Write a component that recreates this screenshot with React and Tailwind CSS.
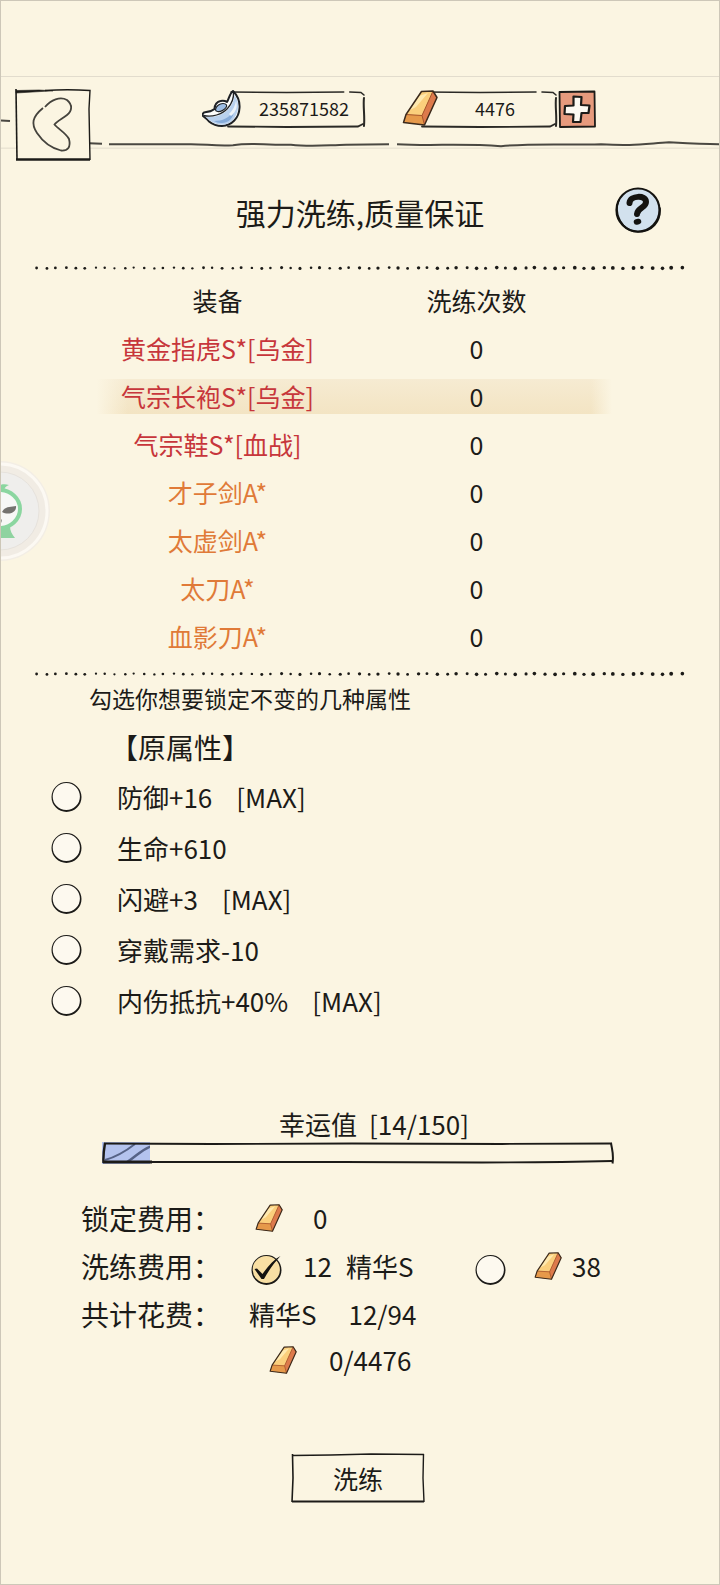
import React, { useState } from "react";

const equipments = [
  { id: 1, name: "黄金指虎S*[乌金]", grade: "S", count: 0 },
  { id: 2, name: "气宗长袍S*[乌金]", grade: "S", count: 0 },
  { id: 3, name: "气宗鞋S*[血战]", grade: "S", count: 0 },
  { id: 4, name: "才子剑A*", grade: "A", count: 0 },
  { id: 5, name: "太虚剑A*", grade: "A", count: 0 },
  { id: 6, name: "太刀A*", grade: "A", count: 0 },
  { id: 7, name: "血影刀A*", grade: "A", count: 0 },
];

const attributes = [
  { id: "def", label: "防御+16", max: true },
  { id: "hp", label: "生命+610", max: false },
  { id: "dodge", label: "闪避+3", max: true },
  { id: "need", label: "穿戴需求-10", max: false },
  { id: "resist", label: "内伤抵抗+40%", max: true },
];

const gradeColors = {
  S: "text-[#c7363b]",
  A: "text-[#e07a38]",
};

const luck = { current: 14, total: 150 };

// Gold bar
const GoldBar = ({ className }) => (
  <svg viewBox="0 0 36 36" className={className} fill="none" aria-hidden="true">
    <path d="M19.5 1.5 L31 1 L35 7.5 L22.5 35 L1.5 32.5 L4 24.5 Z" fill="#e98d4f" />
    <path d="M19.5 1.5 L31 1 L20 25.5 L4 24.5 Z" fill="#fbcf7c" />
    <path d="M17 6 L26 3 L14 17 L8 20 Z" fill="#ffe9ae" />
    <path d="M4 24.5 L20 25.5 L22.5 35 L1.5 32.5 Z" fill="#e6994a" />
    <path d="M31 1 L35 7.5 L22.5 35 L20 25.5 Z" fill="#dd7a4c" />
    <path d="M4 24.5 L20 25.5 L31 1 M20 25.5 L22.5 35" stroke="#a5552a" strokeWidth="1" />
    <path
      d="M19.5 1.5 L31 1 L35 7.5 L22.5 35 L1.5 32.5 L4 24.5 Z"
      stroke="#3b2a1c"
      strokeWidth="1.5"
      strokeLinejoin="round"
    />
  </svg>
);

// Silver ingot
const Ingot = ({ className }) => (
  <svg viewBox="0 0 40 38" className={className} fill="none" stroke="#1f2226" strokeLinejoin="round" aria-hidden="true">
    <path
      d="M31 1 C35 5 38 11 37.500 18 C37 28 30 35.500 20 36 C15 36 10 34 7 31.500 C5 29 3 27.500 1 26 C0 24.500 1 22.500 3 22.300 C7 22 10 21 12.500 19 C12.500 15 15 11.500 18.500 11 C21 10.500 23.500 11 25 12 C27 9 27.500 3.500 31 1 Z"
      fill="#fdfdfb"
      strokeWidth="2"
    />
    <path
      d="M32.500 5 C36 10 37 16 35.500 21 C33 30 27 34.500 20 34.800 C15 34.500 11 33 8 30.500 C6.500 29 5 27.800 4 27 C13 27.500 21 25 26 19.500 C30 15 32 11 32.500 5 Z"
      fill="#b9d1ee"
      stroke="none"
    />
    <path d="M12 31 C20 31 28 28 32 20 C32 28 26 33.500 19 33 C16 33 14 32 12 31 Z" fill="#86abd9" stroke="none" />
    <path d="M27 24 C31 20 33 16 34 11 C36 16 34 22 29 26 Z" fill="#eef4fa" stroke="none" />
    <path d="M1.500 25.500 C10 27.500 20 24.500 25.500 18.500 C30 13.500 32 9 31.500 2" strokeWidth="1.300" />
    <path
      d="M13.500 19.500 C14 16 17.500 13.500 21 13.500 C24.500 13.500 25.500 15.500 24 17.500 C22.500 20 18.500 22 15.500 21.500 C14 21.300 13.500 20.500 13.500 19.500 Z"
      fill="#9dbde4"
      strokeWidth="1.200"
    />
  </svg>
);

// Rough pen frame around the currency amounts
const AmountFrame = () => (
  <svg
    viewBox="0 0 138 38"
    preserveAspectRatio="none"
    className="absolute inset-0 h-full w-full"
    fill="none"
    stroke="#2b2a26"
    strokeLinecap="round"
    aria-hidden="true"
  >
    <path d="M5 2 L60 2.500 L116 2" strokeWidth="1.600" />
    <path d="M122 2 L133 2.500 L136 5" strokeWidth="1.600" />
    <path d="M136 8 C135 16 137 26 136 36" strokeWidth="2" />
    <path d="M2 36.500 L60 37 L130 36.500 L135 34" strokeWidth="1.800" />
  </svg>
);

// Row of ink dots, heavier towards the right end
const DottedLine = () => (
  <svg className="block h-2 w-full" aria-hidden="true">
    {Array.from({ length: 67 }, (_, i) => (
      <circle
        key={i}
        cx={`${0.7 + i * 1.49 + Math.sin(i * 2.3) * 0.12}%`}
        cy={4 + Math.sin(i * 1.7) * 0.4}
        r={i < 6 ? 1.4 : 1.1 + (i / 68) * 0.8 + Math.sin(i * 3.1) * 0.15}
        fill="#1c1b18"
      />
    ))}
  </svg>
);

// Checkbox / radio drawn as an ink circle
const InkCheck = ({ id, type = "checkbox", name, checked, onChange, className = "" }) => (
  <span className={`relative block size-8 shrink-0 ${className}`}>
    <input
      id={id}
      type={type}
      name={name}
      checked={checked}
      onChange={onChange}
      className="block size-8 cursor-pointer appearance-none rounded-full"
    />
    <svg viewBox="0 0 32 32" className="pointer-events-none absolute inset-0 size-8" fill="none" aria-hidden="true">
      <circle cx="16.500" cy="16" r="14.500" fill={checked ? "#f8dfa3" : "#fdf9ef"} />
      <path
        d="M16.500 1 A15 15 0 1 1 16.500 31 A15 15 0 1 1 16.500 1 Z M16.300 1.900 A13.600 13.600 0 1 0 16.300 29.100 A13.600 13.600 0 1 0 16.300 1.900 Z"
        fill="#1c1b18"
        fillRule="evenodd"
      />
      {checked && (
        <path d="M4.500 15 L7 14.500 L12.500 20 C18 12 24 5.500 30.500 2 C25 8 18.500 16.500 14 25 L11.500 25 Z" fill="#141310" />
      )}
    </svg>
  </span>
);

const App = () => {
  const [selected, setSelected] = useState(2);
  const [locked, setLocked] = useState([]);
  const [payment, setPayment] = useState("essence");

  const toggleLock = (id) => {
    setLocked((prev) => (prev.includes(id) ? prev.filter((el) => el !== id) : [...prev, id]));
  };

  return (
    <div className="relative min-h-screen overflow-hidden border border-[#cdc7b8] bg-[#fbf5e2] font-['Noto_Sans_CJK_SC',sans-serif] text-[#1c1b18]">
      {/* Status bar gap */}
      <div className="h-[76px] border-b border-[#e2dccd]" />

      {/* Top bar */}
      <header className="relative flex h-[83px] items-start pl-[14px]">
        <svg
          viewBox="0 0 718 84"
          preserveAspectRatio="none"
          className="absolute inset-0 h-full w-full"
          fill="none"
          stroke="#4a4842"
          aria-hidden="true"
        >
          <path d="M0 72 H718" stroke="#e2dccd" />
          <path d="M0 44 L9 44.500" strokeWidth="2" />
          <path d="M88 67 L101 67.500" strokeWidth="2" />
          <path
            d="M108 68 L190 68 C205 68 215 70 232 69 C250 66 262 69 290 68.500 C310 71 325 69 345 68.500 L388 68"
            strokeWidth="2"
          />
          <path
            d="M396 68 C430 70 460 67 500 70 C530 67 560 69 600 68 C630 70 640 68 668 66 C685 67 700 68 718 68"
            strokeWidth="2"
          />
        </svg>
        <button type="button" aria-label="返回" className="relative mt-3 h-[72px] w-[76px] cursor-pointer">
          <svg viewBox="0 0 76 72" className="h-full w-full" fill="none" stroke="#1c1b18">
            <path d="M1.500 1.500 L74 1 L74 70 L1.500 70 Z" fill="#fbf5e2" stroke="none" />
            <path d="M1 0 L2 71" strokeWidth="1.600" />
            <path d="M1 1.500 L24 1 L38 1.800 L1 4 Z" fill="#1c1b18" strokeWidth=".6" />
            <path d="M30 1.500 C45 .5 60 .5 75 1.500 L74 20 L75 71" strokeWidth="1.400" />
            <path d="M1 70.500 H75" strokeWidth="2.600" />
            <path
              d="M30 18 C36 11 45 7 52 11 C58 16 57 22 52 26 C47 30 42 32 39.500 35.500 C43 40 51 44 54 50 C56 58 53 62 46 61.500 C36 59 28 53 22 44 C16 35 17 28 28 19"
              stroke="#45433d"
              strokeWidth="1.800"
            />
          </svg>
        </button>

        {/* Silver */}
        <div className="relative ml-[135px] mt-[13px] h-[38px] w-[140px]">
          <AmountFrame />
          <Ingot className="absolute -left-6 top-0 h-[38px] w-10" />
          <p className="relative pl-4 text-center text-lg leading-[36px]">235871582</p>
        </div>

        {/* Gold */}
        <div className="relative ml-[54px] mt-[13px] h-[38px] w-[138px]">
          <AmountFrame />
          <GoldBar className="absolute -left-[18px] top-0 size-9" />
          <p className="relative pl-3 text-center text-lg leading-[36px]">4476</p>
        </div>
        <button type="button" aria-label="增加" className="relative mt-[13px] size-[38px] cursor-pointer">
          <svg viewBox="0 0 38 38" className="size-full" fill="none" stroke="#1c1b18" strokeLinejoin="round">
            <path d="M1.500 2 L36.500 1.500 L37 36.500 L2 37 Z" fill="#e69a7d" strokeWidth="1.800" />
            <path
              d="M15.500 6.500 L23.500 7 L23 15 L31.500 15.500 L30.500 23 L23.500 23 L22.500 32 L15 32 L15.500 24.500 L6.500 24 L7 16 L15.500 15.500 Z"
              fill="#fdfaf2"
              strokeWidth="2.200"
            />
          </svg>
        </button>
      </header>

      {/* Title */}
      <div className="grid grid-cols-[1fr_auto_1fr] items-start pt-[26px]">
        <h1 className="col-start-2 mt-1 text-3xl leading-[44px]">强力洗练,质量保证</h1>
        <button type="button" aria-label="帮助" className="mr-[57px] size-12 cursor-pointer justify-self-end">
          <svg viewBox="0 0 48 48" className="size-full" fill="none" stroke="#141310" strokeLinecap="round">
            <circle cx="24" cy="24" r="21.500" fill="#d2e1ee" strokeWidth="2.200" />
            <path d="M5 14 C-1 28 8 45 24 46 C38 46 47 36 46 22" strokeWidth="1.600" />
            <path d="M15.500 17 C16 9.500 32 8.500 32 16 C32 22 23.500 21.500 23 28" strokeWidth="6" />
            <path d="M22.500 36 L24.500 35.500" strokeWidth="5.500" />
          </svg>
        </button>
      </div>

      <div className="mt-[30px] px-[31px]">
        <DottedLine />
      </div>

      {/* Equipment list */}
      <div className="mt-1 pl-[85px] pr-[107px]">
        <table className="w-full table-fixed text-center text-[25px] leading-[36px]">
          <thead>
            <tr className="h-12">
              <th className="p-0 font-normal">装备</th>
              <th className="p-0 pr-2 font-normal">洗练次数</th>
            </tr>
          </thead>
          <tbody>
            {equipments.map((item) => (
              <tr
                key={item.id}
                className={`h-12 ${
                  selected === item.id
                    ? "bg-[linear-gradient(to_right,#fbf5e2_2%,transparent_8%,transparent_96%,#fbf5e2),linear-gradient(#f6ebd2,#f3e4c3)] bg-[length:100%_35px] bg-center bg-no-repeat"
                    : ""
                }`}
              >
                <td className="p-0">
                  <button
                    type="button"
                    onClick={() => setSelected(item.id)}
                    className={`cursor-pointer whitespace-nowrap ${gradeColors[item.grade]}`}
                  >
                    {item.name}
                  </button>
                </td>
                <td className="p-0 pr-2">{item.count}</td>
              </tr>
            ))}
          </tbody>
        </table>
      </div>

      <div className="mt-2.5 px-[31px]">
        <DottedLine />
      </div>

      {/* Locked attributes */}
      <section>
        <p className="mt-[3px] pl-[88px] text-[23px] leading-[34px]">勾选你想要锁定不变的几种属性</p>
        <h2 className="mt-2 pl-[109px] text-[28px] leading-[48px]">【原属性】</h2>
        <ul>
          {attributes.map((attr) => (
            <li key={attr.id} className="flex h-[51px] items-center pl-[49px]">
              <InkCheck id={attr.id} checked={locked.includes(attr.id)} onChange={() => toggleLock(attr.id)} />
              <label htmlFor={attr.id} className="flex cursor-pointer gap-6 pl-[35px] text-[26px] leading-[36px]">
                <span>{attr.label}</span>
                {attr.max && <span>[MAX]</span>}
              </label>
            </li>
          ))}
        </ul>
      </section>

      {/* Luck */}
      <section className="mt-20 pl-[101px] pr-[105px]">
        <p className="flex justify-center gap-3 pl-8 text-[26px] leading-[36px]">
          <span>幸运值</span>
          <span>
            [{luck.current}/{luck.total}]
          </span>
        </p>
        <div
          role="progressbar"
          aria-label="幸运值"
          aria-valuenow={luck.current}
          aria-valuemax={luck.total}
          className="relative h-[22px]"
        >
          <div className="h-full overflow-hidden bg-[#b4c3ee]" style={{ width: `${(luck.current / luck.total) * 100}%` }}>
            <svg viewBox="0 0 48 22" className="h-full w-12" fill="none" stroke="#566387" aria-hidden="true">
              <path d="M3 18 C14 15 24 9 33 2" strokeWidth="2" />
              <path d="M25 20 C34 15 38 8 50 4" strokeWidth="2.400" />
            </svg>
          </div>
          <svg
            viewBox="0 0 512 22"
            preserveAspectRatio="none"
            className="absolute inset-0 h-full w-full"
            fill="none"
            stroke="#1c1b18"
            aria-hidden="true"
          >
            <path d="M2 1.500 L110 2 L250 1.500 L400 2 L510 1.500" strokeWidth="1.800" />
            <path d="M3 1 C2 7 1 14 1.500 21" strokeWidth="2.400" />
            <path d="M509 1 C510 8 512 12 510.500 21.500" strokeWidth="2" />
            <path d="M1 20 H50" strokeWidth="2.800" />
            <path d="M50 20 L240 20 L380 20.500 C430 20.500 470 20 510 19" strokeWidth="1.800" />
          </svg>
        </div>
      </section>

      {/* Costs */}
      <section className="mt-[30px] pl-20 text-[26px] leading-[48px]">
        <div className="flex h-12 items-center">
          <h3 className="w-[174px] text-[28px]">锁定费用：</h3>
          <GoldBar className="size-7" />
          <span className="pl-[30px]">0</span>
        </div>
        <div className="flex h-12 items-center">
          <h3 className="w-[169px] text-[28px]">洗练费用：</h3>
          <InkCheck
            id="pay-essence"
            type="radio"
            name="payment"
            className="mt-2"
            checked={payment === "essence"}
            onChange={() => setPayment("essence")}
          />
          <label htmlFor="pay-essence" className="flex w-[192px] cursor-pointer gap-3.5 pl-[21px]">
            <span>12</span>
            <span>精华S</span>
          </label>
          <InkCheck
            id="pay-gold"
            type="radio"
            name="payment"
            className="mt-2"
            checked={payment === "gold"}
            onChange={() => setPayment("gold")}
          />
          <label htmlFor="pay-gold" className="flex cursor-pointer items-center gap-2.5 pl-7">
            <GoldBar className="size-7" />
            <span>38</span>
          </label>
        </div>
        <div className="flex h-12 items-center">
          <h3 className="w-[168px] text-[28px]">共计花费：</h3>
          <span>精华S</span>
          <span className="pl-8">12/94</span>
        </div>
        <div className="flex h-11 items-center pl-[188px]">
          <GoldBar className="size-7" />
          <span className="pl-8">0/4476</span>
        </div>
      </section>

      {/* Submit */}
      <div className="mt-[71px] flex justify-center pb-20 pr-1">
        <button type="button" className="relative h-[50px] w-[134px] cursor-pointer text-[25px] leading-[46px]">
          <svg
            viewBox="0 0 134 50"
            preserveAspectRatio="none"
            className="absolute inset-0 h-full w-full"
            fill="none"
            stroke="#1c1b18"
            aria-hidden="true"
          >
            <path d="M1 2.500 L40 2 L80 1 L133 1.500" strokeWidth="1.600" />
            <path d="M1.500 1 L2 25 L1 49" strokeWidth="1.600" />
            <path d="M132.500 1 L132 25 L133 49" strokeWidth="1.400" />
            <path d="M1 48.500 H133" strokeWidth="2" />
          </svg>
          洗练
        </button>
      </div>

      {/* Floating helper, half hidden behind the left edge */}
      <button type="button" aria-label="助手" className="absolute -left-[52px] top-[459px] size-[102px] cursor-pointer">
        <svg viewBox="0 0 102 102" className="size-full" fill="none">
          <circle cx="51" cy="51" r="50" fill="#f3eee5" />
          <circle cx="51" cy="51" r="47" fill="#f1ece4" stroke="#fcf9f3" strokeWidth="3" />
          <circle cx="51" cy="51" r="39" fill="#efeeec" stroke="#e6e2dc" strokeWidth="1" />
          <path d="M38 78 V66 H61 C61 71 63 74 66 78 Z" fill="#8fd3a0" />
          <ellipse cx="50" cy="49" rx="21" ry="19" fill="#f7f8f6" stroke="#8bd6a0" strokeWidth="4" />
          <path d="M46 30 C48 25 54 23 60 25 C57 26 55 28 55 31 Z" fill="#8bd6a0" />
          <path d="M53 52 C56 46 62 47 67 46 C68 52 60 56 53 52 Z" fill="#74736f" />
          <path d="M48 57 C51 57 54 59 52 63 C50 64 48 64 47 62 Z" fill="#74736f" />
        </svg>
      </button>
    </div>
  );
};

export default App;
